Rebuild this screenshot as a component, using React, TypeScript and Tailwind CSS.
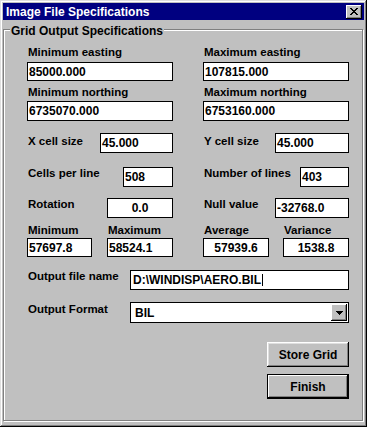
export default function App() {
  const label = "text-[11.5px] font-bold leading-[14px] pl-[1px] whitespace-nowrap";
  const field =
    "bg-white border border-black text-[12px] font-bold leading-none flex items-center px-[1px] text-black";

  return (
    <div className="w-[367px] h-[427px] bg-[#c0c0c0] p-[3px] shadow-[inset_-1px_-1px_0_#000,inset_1px_1px_0_#dfdfdf,inset_-2px_-2px_0_#808080,inset_2px_2px_0_#fff] font-['Liberation_Sans',Arial,sans-serif] text-black select-none">
      {/* title bar */}
      <div className="h-[17px] bg-[#000080] flex items-center justify-between pl-[3px] pr-[2px]">
        <span className="text-white text-[12px] font-bold leading-none">Image File Specifications</span>
        <button className="w-[16px] h-[14px] bg-[#c0c0c0] flex items-center justify-center shadow-[inset_-1px_-1px_0_#000,inset_1px_1px_0_#fff,inset_-2px_-2px_0_#808080]">
          <svg width="8" height="7" viewBox="0 0 8 7" shapeRendering="crispEdges">
            <path
              d="M0 0h2v1H0zM6 0h2v1H6zM1 1h2v1H1zM5 1h2v1H5zM2 2h4v1H2zM3 3h2v1H3zM2 4h4v1H2zM1 5h2v1H1zM5 5h2v1H5zM0 6h2v1H0zM6 6h2v1H6z"
              fill="#000"
            />
          </svg>
        </button>
      </div>

      {/* group box */}
      <div className="relative mt-[9px] w-[360px] h-[392px] border border-[#808080] shadow-[inset_1px_1px_0_#fff,1px_1px_0_#fff]">
        <span className="absolute -top-[6px] left-[6px] px-[1px] bg-[#c0c0c0] text-[12px] font-bold leading-[14px]">
          Grid Output Specifications
        </span>

        <div className="pl-[23px] pt-[15px] w-[346px] flex flex-col">
          {/* eastings */}
          <div className="grid grid-cols-[146px_146px] gap-x-[30px]">
            <div className="flex flex-col">
              <span className={label}>Minimum easting</span>
              <div className={`${field} mt-[3px] h-[19px]`}>85000.000</div>
            </div>
            <div className="flex flex-col">
              <span className={label}>Maximum easting</span>
              <div className={`${field} mt-[3px] h-[19px]`}>107815.000</div>
            </div>
          </div>

          {/* northings */}
          <div className="grid grid-cols-[146px_146px] gap-x-[30px] mt-[4px]">
            <div className="flex flex-col">
              <span className={label}>Minimum northing</span>
              <div className={`${field} mt-[2px] h-[20px]`}>6735070.000</div>
            </div>
            <div className="flex flex-col">
              <span className={label}>Maximum northing</span>
              <div className={`${field} mt-[2px] h-[20px]`}>6753160.000</div>
            </div>
          </div>

          {/* cell size */}
          <div className="grid grid-cols-[146px_146px] gap-x-[30px] mt-[12px]">
            <div className="flex items-start">
              <span className={`${label} mt-[1px]`}>X cell size</span>
              <div className={`${field} ml-auto w-[73px] h-[20px]`}>45.000</div>
            </div>
            <div className="flex items-start">
              <span className={`${label} mt-[1px]`}>Y cell size</span>
              <div className={`${field} ml-auto w-[74px] h-[20px]`}>45.000</div>
            </div>
          </div>

          {/* cells / lines */}
          <div className="grid grid-cols-[146px_146px] gap-x-[30px] mt-[14px]">
            <div className="flex items-start">
              <span className={`${label} -mt-[1px]`}>Cells per line</span>
              <div className={`${field} ml-auto w-[50px] h-[20px]`}>508</div>
            </div>
            <div className="flex items-start">
              <span className={`${label} -mt-[1px]`}>Number of lines</span>
              <div className={`${field} ml-auto w-[49px] h-[20px]`}>403</div>
            </div>
          </div>

          {/* rotation / null */}
          <div className="grid grid-cols-[146px_146px] gap-x-[30px] mt-[11px]">
            <div className="flex items-start">
              <span className={`${label} -mt-[1px]`}>Rotation</span>
              <div className={`${field} ml-auto w-[66px] h-[20px] justify-center`}>0.0</div>
            </div>
            <div className="flex items-start">
              <span className={`${label} -mt-[1px]`}>Null value</span>
              <div className={`${field} ml-auto w-[74px] h-[20px]`}>-32768.0</div>
            </div>
          </div>

          {/* stats */}
          <div className="grid grid-cols-[146px_146px] gap-x-[30px] mt-[5px]">
            <div className="flex">
              <div className="flex flex-col w-[65px]">
                <span className={label}>Minimum</span>
                <div className={`${field} mt-[1px] h-[19px]`}>57697.8</div>
              </div>
              <div className="flex flex-col w-[66px] ml-auto">
                <span className={label}>Maximum</span>
                <div className={`${field} mt-[1px] h-[19px]`}>58524.1</div>
              </div>
            </div>
            <div className="flex">
              <div className="flex flex-col w-[66px]">
                <span className={label}>Average</span>
                <div className={`${field} mt-[1px] h-[19px] justify-center`}>57939.6</div>
              </div>
              <div className="flex flex-col w-[66px] ml-auto">
                <span className={label}>Variance</span>
                <div className={`${field} mt-[1px] h-[19px] justify-center`}>1538.8</div>
              </div>
            </div>
          </div>

          {/* output file */}
          <div className="flex items-start mt-[13px] w-[322px]">
            <span className={`${label} -mt-[1px]`}>Output file name</span>
            <div className={`${field} ml-auto w-[219px] h-[20px] pl-[2px]`}>
              D:\WINDISP\AERO.BIL
              <span className="w-[1px] h-[12px] bg-black ml-[1px]" />
            </div>
          </div>

          {/* output format */}
          <div className="flex items-start mt-[12px] w-[322px]">
            <span className={label}>Output Format</span>
            <div className="ml-auto w-[219px] h-[21px] bg-white border border-black flex items-center pl-[4px] pr-[1px]">
              <span className="text-[12px] font-bold leading-none">BIL</span>
              <div className="ml-auto w-[16px] h-[17px] bg-[#c0c0c0] flex items-center justify-center shadow-[inset_-1px_-1px_0_#000,inset_1px_1px_0_#fff,inset_-2px_-2px_0_#808080]">
                <svg width="7" height="4" viewBox="0 0 7 4" shapeRendering="crispEdges">
                  <path d="M0 0h7v1H0zM1 1h5v1H1zM2 2h3v1H2zM3 3h1v1H3z" fill="#000" />
                </svg>
              </div>
            </div>
          </div>

          {/* buttons */}
          <div className="flex flex-col items-end w-[322px]">
            <button className="mt-[19px] w-[82px] h-[25px] bg-[#c0c0c0] text-[12px] font-bold leading-none shadow-[inset_-1px_-1px_0_#000,inset_1px_1px_0_#fff,inset_-2px_-2px_0_#808080,inset_2px_2px_0_#dfdfdf]">
              Store Grid
            </button>
            <button className="mt-[7px] w-[82px] h-[25px] bg-[#c0c0c0] border border-black text-[12px] font-bold leading-none shadow-[inset_-1px_-1px_0_#000,inset_1px_1px_0_#fff,inset_-2px_-2px_0_#808080]">
              Finish
            </button>
          </div>
        </div>
      </div>
    </div>
  );
}
